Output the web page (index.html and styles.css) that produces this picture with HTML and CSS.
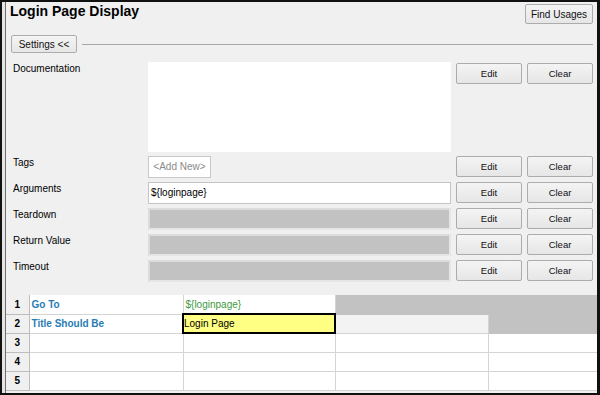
FILE: index.html
```html
<!DOCTYPE html>
<html lang="en">
<head>
    <meta charset="UTF-8">
    <title>Login Page Display</title>
    <link rel="stylesheet" href="styles.css">
</head>
<body>
    <div class="window">
        <div class="panel">
            <div class="header">
                <h1 class="title">Login Page Display</h1>
                <button class="btn find-btn">Find Usages</button>
            </div>

            <div class="settings">
                <button class="btn settings-btn">Settings &lt;&lt;</button>
                <span class="rule"></span>
            </div>

            <div class="form">
                <span class="label">Documentation</span>
                <div class="field doc"></div>
                <button class="btn small top">Edit</button>
                <button class="btn small top">Clear</button>

                <span class="label">Tags</span>
                <div class="field-wrap"><span class="add-new">&lt;Add New&gt;</span></div>
                <button class="btn small">Edit</button>
                <button class="btn small">Clear</button>

                <span class="label">Arguments</span>
                <div class="field input">${loginpage}</div>
                <button class="btn small">Edit</button>
                <button class="btn small">Clear</button>

                <span class="label">Teardown</span>
                <div class="field disabled"></div>
                <button class="btn small">Edit</button>
                <button class="btn small">Clear</button>

                <span class="label">Return Value</span>
                <div class="field disabled"></div>
                <button class="btn small">Edit</button>
                <button class="btn small">Clear</button>

                <span class="label">Timeout</span>
                <div class="field disabled"></div>
                <button class="btn small">Edit</button>
                <button class="btn small">Clear</button>
            </div>

            <table class="kw-grid">
                <colgroup>
                    <col class="c-num">
                    <col class="c-a">
                    <col class="c-b">
                    <col class="c-c">
                    <col class="c-d">
                </colgroup>
                <tr>
                    <th>1</th>
                    <td class="keyword">Go To</td>
                    <td class="arg">${loginpage}</td>
                    <td class="empty"></td>
                    <td class="empty"></td>
                </tr>
                <tr>
                    <th>2</th>
                    <td class="keyword">Title Should Be</td>
                    <td class="selected">Login Page</td>
                    <td class="optional"></td>
                    <td class="empty"></td>
                </tr>
                <tr><th>3</th><td></td><td></td><td></td><td></td></tr>
                <tr><th>4</th><td></td><td></td><td></td><td></td></tr>
                <tr><th>5</th><td></td><td></td><td></td><td></td></tr>
            </table>
        </div>
    </div>
</body>
</html>
```

FILE: styles.css
```css
:root {
    --panel-bg: #f0f0f0;
    --btn-border: #acacac;
    --grid-line: #d4d4d4;
    --keyword-color: #2a7db5;
    --arg-color: #3c9a3c;
    --disabled-bg: #c2c2c2;
}

* {
    box-sizing: border-box;
}

body {
    margin: 0;
    font-family: "Liberation Sans", Arial, sans-serif;
    font-size: 10px;
    color: #000;
    background: #fff;
}

.window {
    width: 600px;
    height: 395px;
    border: 2px solid #111;
    border-right-width: 3px;
    background: #e4e4e4;
    overflow: hidden;
}

.panel {
    height: 100%;
    margin-left: 3px;
    border-left: 1px solid #6e6e6e;
    background: var(--panel-bg);
    padding: 1px 4px 0 0;
}

.header {
    display: flex;
    justify-content: space-between;
    align-items: flex-start;
    padding-left: 4px;
}

.title {
    margin: 0;
    font-size: 14px;
    line-height: 17px;
    font-weight: bold;
}

.btn {
    font-family: "Liberation Sans", Arial, sans-serif;
    font-size: 10px;
    color: #111;
    background: linear-gradient(#f4f4f4, #e6e6e6);
    border: 1px solid var(--btn-border);
    border-radius: 2px;
    padding: 0;
    cursor: pointer;
}

.find-btn {
    margin-top: 1px;
    width: 68px;
    height: 20px;
}

.settings {
    display: flex;
    align-items: center;
    gap: 5px;
    margin-top: 11px;
    padding-left: 5px;
}

.settings-btn {
    width: 66px;
    height: 18px;
}

.rule {
    flex: 1;
    height: 1px;
    background: #a8a8a8;
}

.form {
    display: grid;
    grid-template-columns: 130px 303px 66px 66px;
    grid-template-rows: 90px repeat(5, 22px);
    column-gap: 5px;
    row-gap: 4px;
    margin: 9px 0 0 7px;
}

.label {
    line-height: 13px;
}

.field {
    background: #fff;
}

.field.input {
    border: 1px solid #c4c4c4;
    padding: 4px 2px;
    line-height: 12px;
}

.field.disabled {
    background: var(--disabled-bg);
    border: 2px solid #dcdcdc;
    border-right-color: #e6e6e6;
    border-bottom-color: #e6e6e6;
}

.add-new {
    display: inline-block;
    width: 63px;
    height: 22px;
    line-height: 20px;
    text-align: center;
    background: #fff;
    border: 1px solid #c8c8c8;
    color: #8a8a8a;
}

.btn.small {
    font-size: 9.5px;
    height: 21px;
}

.btn.top {
    margin-top: 1px;
    align-self: start;
}

.kw-grid {
    margin-top: 13px;
    width: 591px;
    border-collapse: collapse;
    table-layout: fixed;
    background: #fff;
}

.c-num { width: 23px; }
.c-a { width: 154px; }
.c-b { width: 152px; }
.c-c { width: 153px; }
.c-d { width: 109px; }

.kw-grid th,
.kw-grid td {
    height: 19px;
    padding: 0 2px;
    border: 1px solid var(--grid-line);
    white-space: nowrap;
    overflow: hidden;
    font-size: 10px;
}

.kw-grid tr:first-child th,
.kw-grid tr:first-child td {
    border-top: none;
}

.kw-grid th {
    background: #f0f0f0;
    border-color: #bdbdbd;
    border-left: none;
    font-weight: bold;
    text-align: center;
}

.kw-grid td.keyword {
    color: var(--keyword-color);
    font-weight: bold;
}

.kw-grid td.arg {
    color: var(--arg-color);
}

.kw-grid td.empty {
    background: var(--disabled-bg);
    border-color: var(--disabled-bg);
}

.kw-grid td.optional {
    background: #f3f3f3;
}

.kw-grid td.selected {
    background: #ffff84;
    border: 2px solid #000;
    padding-left: 0;
}
```
